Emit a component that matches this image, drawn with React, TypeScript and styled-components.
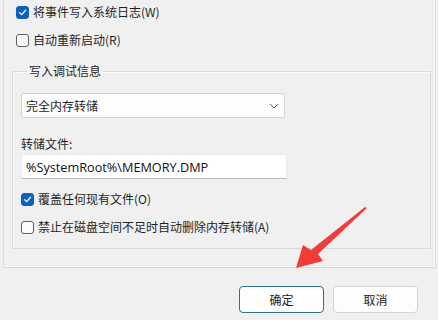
import React from 'react'
import styled, { createGlobalStyle } from 'styled-components'

const GlobalStyle = createGlobalStyle`
  html, body {
    margin: 0;
    padding: 0;
    background: #f0f0f0;
  }
  body {
    font-family: "Noto Sans CJK SC", "Noto Sans", sans-serif;
    font-size: 12px;
    color: #1f1f1f;
  }
`

const Page = styled.div`
  position: relative;
  width: 438px;
  height: 320px;
  padding: 0 3px;
  box-sizing: border-box;
  overflow: hidden;
`

const Panel = styled.div`
  width: 433px;
  box-sizing: border-box;
  border: 1px solid #dadada;
  border-top: none;
  box-shadow: inset -1px -1px 0 #fafafa;
  padding: 0 4px 18px 8px;
`

const CheckRow = styled.label<{ $indent?: number }>`
  display: flex;
  align-items: center;
  height: 24px;
  gap: 4px;
  padding-left: ${p => p.$indent ?? 0}px;
  line-height: 16px;
  white-space: nowrap;
`

const TopRows = styled.div`
  display: flex;
  flex-direction: column;
  gap: 4px;
`

const Box = styled.span<{ $checked?: boolean }>`
  width: 13px;
  height: 13px;
  box-sizing: border-box;
  border-radius: 3px;
  display: inline-flex;
  align-items: center;
  justify-content: center;
  flex: none;
  background: ${p => (p.$checked ? '#0a63b8' : '#fbfbfb')};
  border: 1px solid ${p => (p.$checked ? '#0a63b8' : '#5e5e5e')};
`

const Group = styled.fieldset`
  margin: 11px 0 0 0;
  padding: 14px 8px 9px 8px;
  border: 1px solid #d9d9d9;
  box-shadow: inset 1px 1px 0 #fafafa;
  min-width: 0;
  width: 419px;
  box-sizing: border-box;
`

const Legend = styled.legend`
  margin-left: 6px;
  padding: 0 2px;
  line-height: 16px;
`

const Select = styled.div`
  width: 264px;
  height: 25px;
  box-sizing: border-box;
  background: #fdfdfd;
  border: 1px solid #d4d4d4;
  border-radius: 2px;
  display: flex;
  align-items: center;
  justify-content: space-between;
  padding: 0 5px 0 4px;
`

const FieldLabel = styled.div`
  margin-top: 18px;
  line-height: 16px;
`

const TextBox = styled.div`
  margin-top: 2px;
  width: 266px;
  height: 25px;
  box-sizing: border-box;
  background: #ffffff;
  border: 1px solid #eaeaea;
  border-bottom-color: #b9b9b9;
  display: flex;
  align-items: center;
  padding: 0 4px;
  font-family: "Open Sans", "Noto Sans", sans-serif;
  font-size: 12.7px;
  color: #111;
`

const Options = styled.div`
  margin-top: 8px;
  display: flex;
  flex-direction: column;
  gap: 4px;
`

const Footer = styled.div`
  display: flex;
  justify-content: flex-end;
  gap: 9px;
  margin-top: 18px;
  padding-right: 17px;
`

const Button = styled.button<{ $primary?: boolean }>`
  width: 85px;
  height: 27px;
  border-radius: 4px;
  background: #fdfdfd;
  border: 1px solid ${p => (p.$primary ? '#2f6f8f' : '#d3d3d3')};
  font-family: inherit;
  font-size: 12px;
  color: #1b1b1b;
  padding: 0;
`

const Arrow = styled.svg`
  position: absolute;
  left: 0;
  top: 0;
  pointer-events: none;
`

function Check({ checked }: { checked?: boolean }) {
  return (
    <Box $checked={checked}>
      {checked && (
        <svg width="9" height="9" viewBox="0 0 9 9">
          <path d="M1.5 4.6 L3.6 6.6 L7.6 2.2" fill="none" stroke="#fff" strokeWidth="1.3" strokeLinecap="round" strokeLinejoin="round" />
        </svg>
      )}
    </Box>
  )
}

export default function App() {
  return (
    <>
      <GlobalStyle />
      <Page>
        <Panel>
          <TopRows>
            <CheckRow $indent={4}>
              <Check checked />
              将事件写入系统日志(W)
            </CheckRow>
            <CheckRow $indent={4}>
              <Check />
              自动重新启动(R)
            </CheckRow>
          </TopRows>

          <Group>
            <Legend>写入调试信息</Legend>
            <Select>
              <span>完全内存转储</span>
              <svg width="10" height="6" viewBox="0 0 10 6">
                <path d="M1 1 L5 5 L9 1" fill="none" stroke="#606060" strokeWidth="1" />
              </svg>
            </Select>
            <FieldLabel>转储文件:</FieldLabel>
            <TextBox>%SystemRoot%\MEMORY.DMP</TextBox>
            <Options>
              <CheckRow>
                <Check checked />
                覆盖任何现有文件(O)
              </CheckRow>
              <CheckRow>
                <Check />
                禁止在磁盘空间不足时自动删除内存转储(A)
              </CheckRow>
            </Options>
          </Group>
        </Panel>

        <Footer>
          <Button $primary>确定</Button>
          <Button>取消</Button>
        </Footer>

        <Arrow width="438" height="320" viewBox="0 0 438 320">
          <polygon
            points="367,208 318,254 323,261 296,268 303,245 311,250 365,207"
            fill="#f23b3b"
          />
        </Arrow>
      </Page>
    </>
  )
}
